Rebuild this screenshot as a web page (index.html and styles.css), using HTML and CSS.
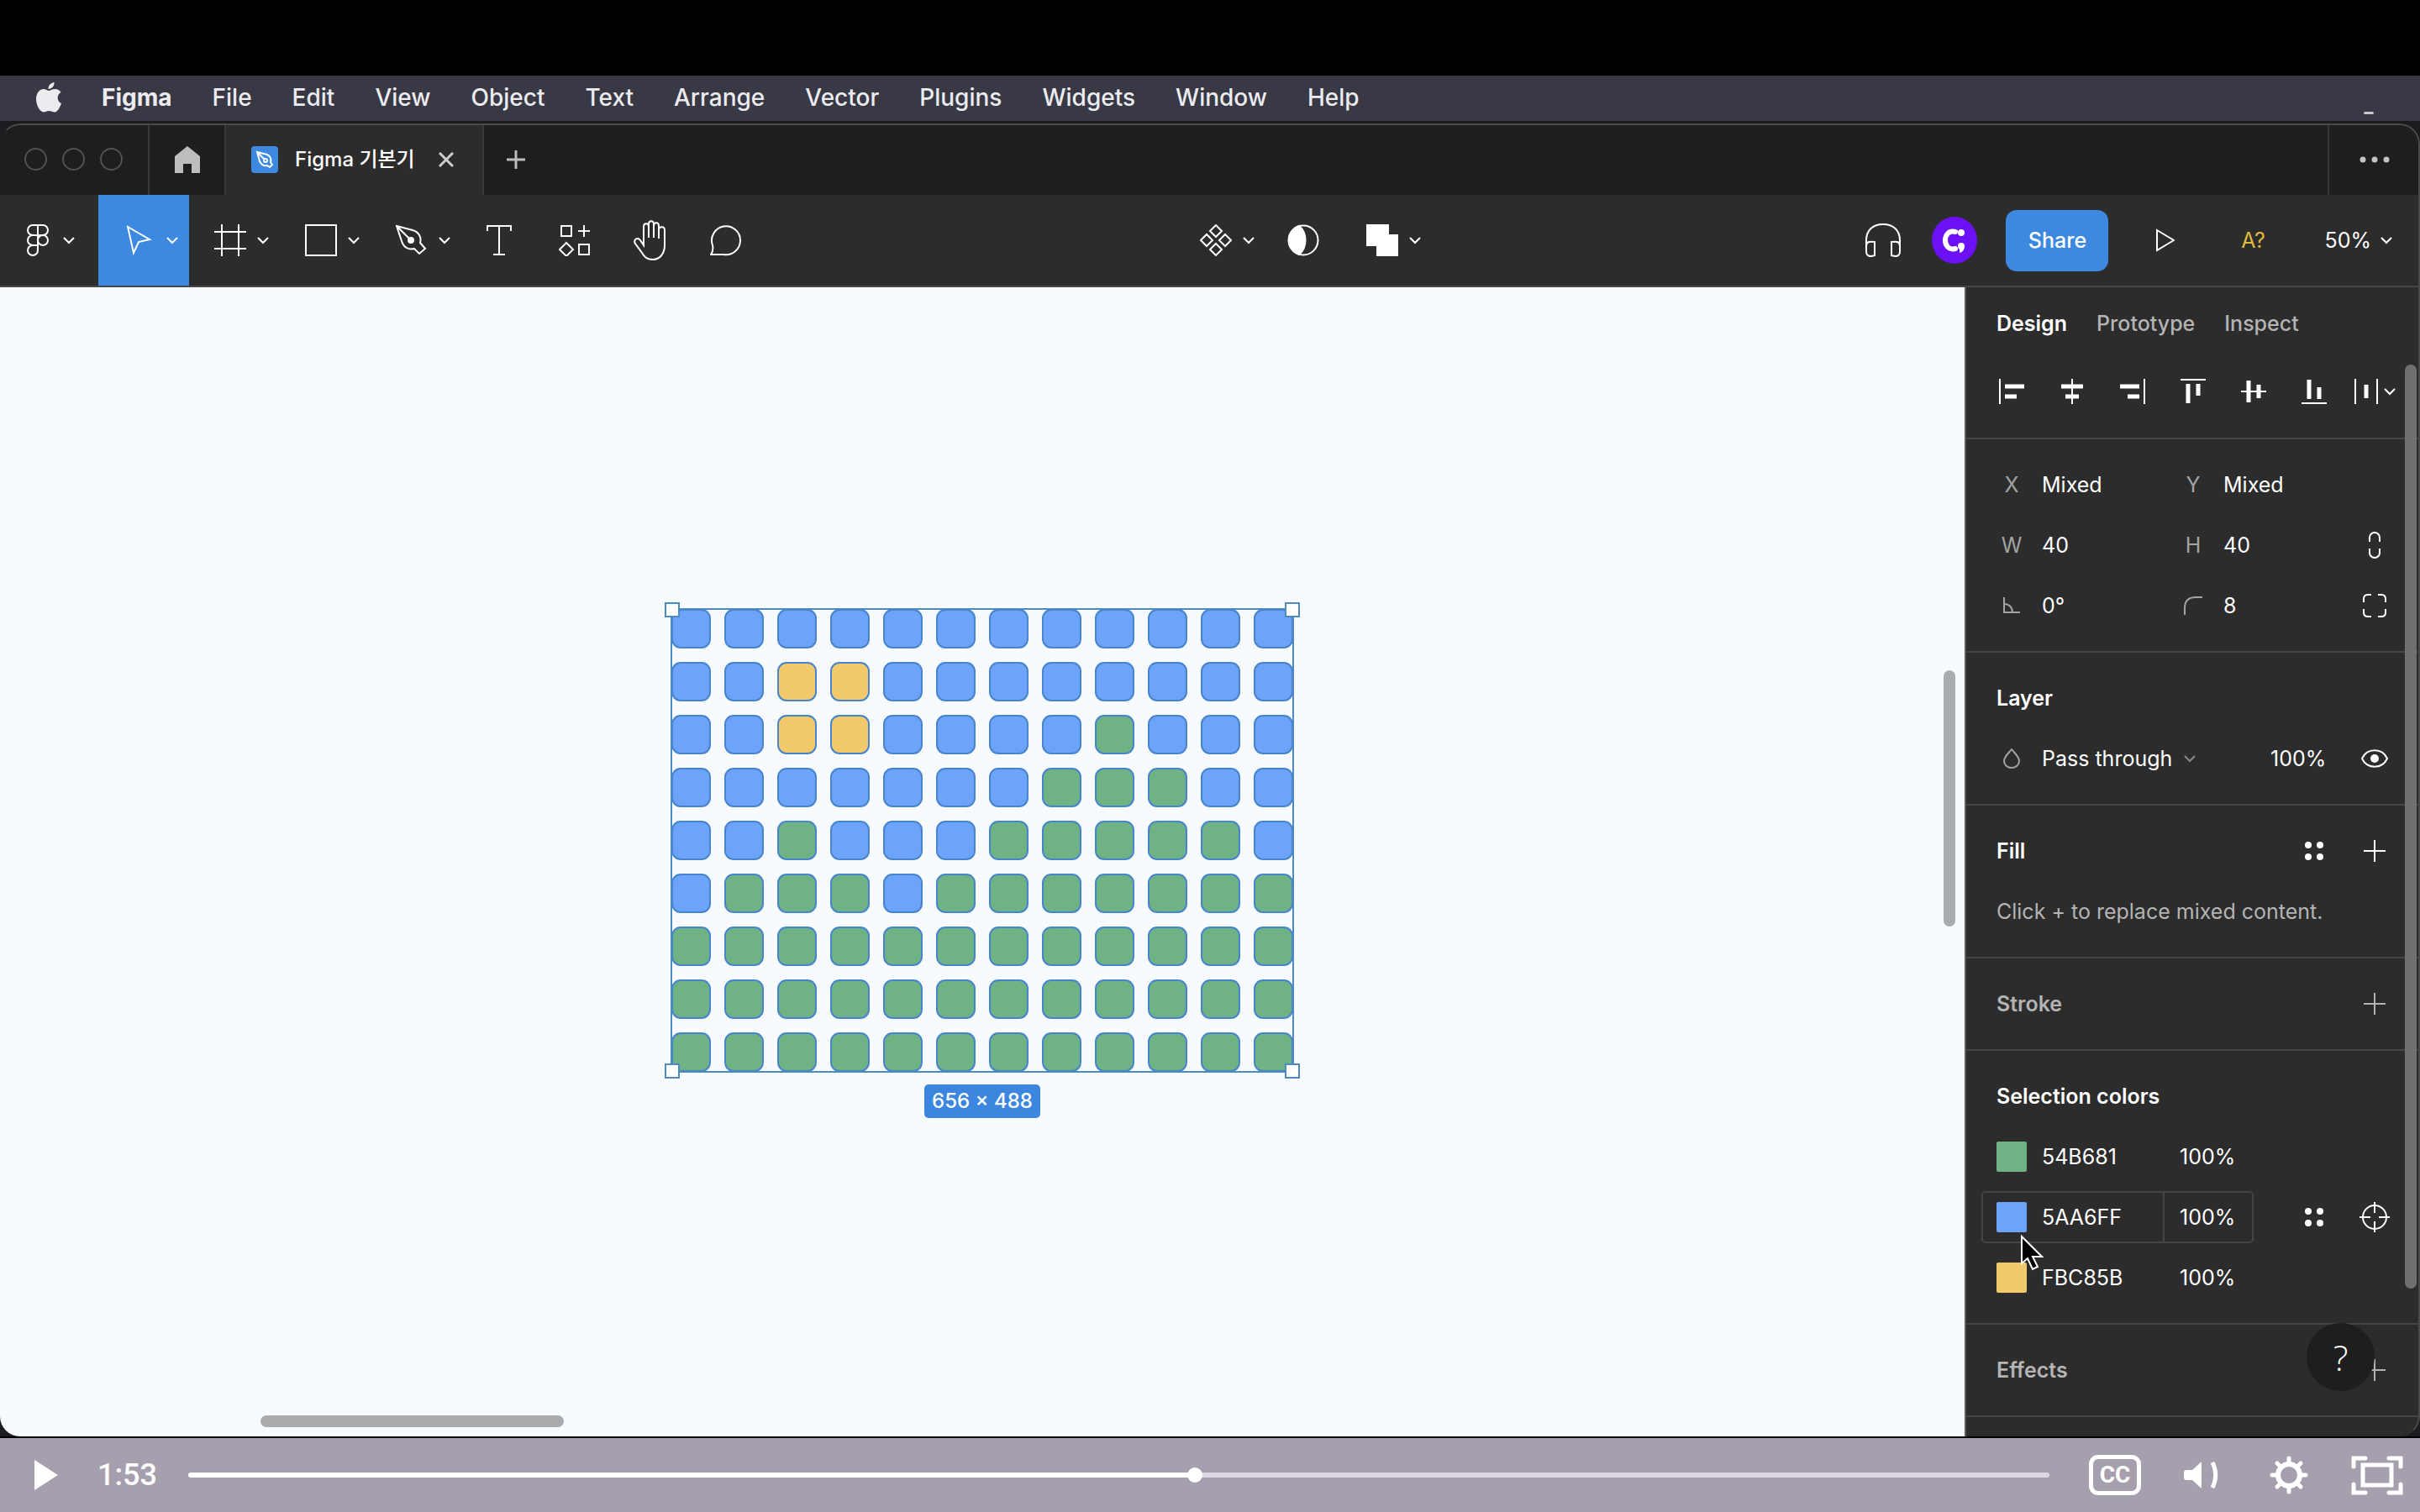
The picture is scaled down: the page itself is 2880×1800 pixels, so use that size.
FILE: index.html
```html
<!DOCTYPE html>
<html lang="ko">
<head>
    <meta charset="UTF-8">
    <meta name="viewport" content="width=device-width, initial-scale=1.0">
    <title>Figma 기본기</title>
    <link rel="stylesheet" href="styles.css">
</head>
<body>
    <svg class="symbols" aria-hidden="true">
        <symbol id="chevron" viewBox="0 0 16 10"><path d="M2 2l6 6 6-6" fill="none" stroke="currentColor" stroke-width="2"/></symbol>
        <symbol id="plus" viewBox="0 0 26 26"><path d="M13 0v26M0 13h26" fill="none" stroke="currentColor" stroke-width="2"/></symbol>
        <symbol id="dots" viewBox="0 0 22 22"><g fill="currentColor" stroke="none"><circle cx="4" cy="4" r="4"/><circle cx="18" cy="4" r="4"/><circle cx="4" cy="18" r="4"/><circle cx="18" cy="18" r="4"/></g></symbol>
    </svg>

    <nav class="menubar">
        <svg class="apple" width="30" height="36" viewBox="0 0 30 36" fill="currentColor"><path d="M15 10c2 0 4-2 7.500-2 3 0 5.500 1.500 7 3.700-5.500 3.300-4.800 11 .5 13.300-1.500 4.500-4.500 10.500-8 10.500-2.600 0-3.600-1.500-6.600-1.500s-4 1.500-6.500 1.500C4.500 35.500 0 27 0 20 0 12.500 4.500 8 9 8c2.600 0 4.500 2 6 2z"/><path d="M14.500 8C14.200 4 17.500.6 21.500 0c.5 4.200-3 8-7 8z"/></svg>
        <strong>Figma</strong>
        <span>File</span>
        <span>Edit</span>
        <span>View</span>
        <span>Object</span>
        <span>Text</span>
        <span>Arrange</span>
        <span>Vector</span>
        <span>Plugins</span>
        <span>Widgets</span>
        <span>Window</span>
        <span>Help</span>
        <i class="menubar-mark"></i>
    </nav>

    <div class="stage">
        <div class="window">
            <header class="tabbar">
                <div class="lights"><i></i><i></i><i></i></div>
                <button class="home" aria-label="Home">
                    <svg width="30" height="32" viewBox="0 0 30 32" fill="#bdbdbd"><path d="M15 0L30 12v20H20V21H10v11H0V12z"/></svg>
                </button>
                <div class="tab">
                    <svg width="32" height="32" viewBox="0 0 32 32"><rect width="32" height="32" rx="4" fill="#3d89e0"/><g fill="none" stroke="#fff" stroke-width="2"><path d="M7 7l12 3c4 2 5 6 4 9l2 3-3 3-3-2c-4 1-7-1-9-5zM7 7l9 9"/><circle cx="17" cy="17" r="2"/></g></svg>
                    <span>Figma 기본기</span>
                    <button aria-label="Close tab">
                        <svg width="18" height="18" viewBox="0 0 18 18"><path d="M1 1l16 16M17 1L1 17" stroke="#cfcfcf" stroke-width="3"/></svg>
                    </button>
                </div>
                <button class="new-tab" aria-label="New tab">
                    <svg width="22" height="22" viewBox="0 0 22 22"><path d="M11 0v22M0 11h22" stroke="#bdbdbd" stroke-width="3"/></svg>
                </button>
                <button class="more" aria-label="More">
                    <svg width="36" height="8" viewBox="0 0 36 8" fill="#c4c4c4"><circle cx="4" cy="4" r="3.500"/><circle cx="18" cy="4" r="3.500"/><circle cx="32" cy="4" r="3.500"/></svg>
                </button>
            </header>

            <div class="toolbar">
                <div class="tools">
                    <button class="tool tool-main" aria-label="Main menu">
                        <svg class="icon" viewBox="0 0 38 38"><g><path d="M21 1h-6a6 6 0 0 0 0 12h6zM21 13h-6a6 6 0 0 0 0 12h6zM21 25h-6a6 6 0 1 0 6 6zM21 1h6a6 6 0 0 1 0 12h-6z"/><circle cx="27" cy="19" r="6"/></g></svg>
                        <svg class="chev"><use href="#chevron"/></svg>
                    </button>
                    <button class="tool active" aria-label="Move">
                        <svg class="icon" viewBox="0 0 38 38"><path d="M5 3l26 15-13 3-6 13z"/></svg>
                        <svg class="chev"><use href="#chevron"/></svg>
                    </button>
                    <button class="tool" aria-label="Frame">
                        <svg class="icon" viewBox="0 0 38 38"><path d="M9 0v38M29 0v38M0 9h38M0 29h38"/></svg>
                        <svg class="chev"><use href="#chevron"/></svg>
                    </button>
                    <button class="tool" aria-label="Rectangle">
                        <svg class="icon" viewBox="0 0 38 38"><rect x="1" y="1" width="36" height="36"/></svg>
                        <svg class="chev"><use href="#chevron"/></svg>
                    </button>
                    <button class="tool" aria-label="Pen">
                        <svg class="icon" viewBox="0 0 38 38"><path d="M1 2l19 5c7 2 11 8 9 15l6 7-7 6-6-6c-7 2-13-2-15-9zM1 2l16 16"/><circle cx="18" cy="19" r="3" fill="#fff"/></svg>
                        <svg class="chev"><use href="#chevron"/></svg>
                    </button>
                    <button class="tool small" aria-label="Text">
                        <svg class="icon" viewBox="0 0 38 38"><path d="M5 8V2h28v6M19 2v34M12 36h14"/></svg>
                    </button>
                    <button class="tool small" aria-label="Resources">
                        <svg class="icon" viewBox="0 0 38 38"><path d="M3 2h12v12H3zM24 24h12v12H24zM30 1v14M23 8h14M9 22l8 8-8 8-8-8z"/></svg>
                    </button>
                    <button class="tool small" aria-label="Hand">
                        <svg class="icon hand" viewBox="0 0 42 48"><path d="M13 25V8c0-5 6-5 6 0v13V5c0-5 6-5 6 0v16V7c0-5 6-5 6 0v15V12c0-5 7-5 7 0v18c0 10-6 17-14 17-7 0-10-3-13-8L3 28c-3-5 3-8 6-4l4 6z"/></svg>
                    </button>
                    <button class="tool small" aria-label="Comment">
                        <svg class="icon" viewBox="0 0 38 38"><path d="M1 36c2-3 3-7 2-11A17 17 0 1 1 16 36z"/></svg>
                    </button>
                </div>

                <div class="tools">
                    <button class="tool" aria-label="Component">
                        <svg class="icon" viewBox="0 0 38 38"><path d="M19 1l7 7-7 7-7-7zM19 23l7 7-7 7-7-7zM8 12l7 7-7 7-7-7zM30 12l7 7-7 7-7-7z"/></svg>
                        <svg class="chev"><use href="#chevron"/></svg>
                    </button>
                    <button class="tool small" aria-label="Mask">
                        <svg class="icon" viewBox="0 0 38 38"><circle cx="19" cy="19" r="17.500"/><path d="M14 2a18 18 0 0 0 0 34c10-8 10-26 0-34z" fill="#fff"/></svg>
                    </button>
                    <button class="tool" aria-label="Union">
                        <svg class="icon" viewBox="0 0 38 38"><path d="M1 1h25v12h11v24H13V25H1z" fill="#fff"/></svg>
                        <svg class="chev"><use href="#chevron"/></svg>
                    </button>
                </div>

                <div class="tools">
                    <button class="audio" aria-label="Audio">
                        <svg width="42" height="40" viewBox="0 0 42 40" fill="none" stroke="#fff" stroke-width="2"><path d="M1 30V20C1 8 9 1 21 1s20 7 20 19v10M1 27c0-5 3-6 10-5v16c-6 2-10 1-10-5zM41 27c0-5-3-6-10-5v16c6 2 10 1 10-5z"/></svg>
                    </button>
                    <svg class="avatar" width="54" height="56" viewBox="0 0 54 56"><ellipse cx="27" cy="28" rx="27" ry="28" fill="#6c10f5"/><path d="M28 18c-8-2-12 4-12 10s4 12 12 10" fill="none" stroke="#fff" stroke-width="6" stroke-linecap="round"/><circle cx="35" cy="19" r="4" fill="#fff"/><path d="M31 35a4 4 0 1 1 8 0c0 4-2 7-6 8v-4c-1-1-2-2-2-4z" fill="#fff"/></svg>
                    <button class="share">Share</button>
                    <button class="present" aria-label="Present">
                        <svg width="22" height="28" viewBox="0 0 22 28"><path d="M1 2l20 12L1 26z" fill="none" stroke="#fff" stroke-width="2"/></svg>
                    </button>
                    <button class="missing">A?</button>
                    <button class="zoom">50% <svg class="chev"><use href="#chevron"/></svg></button>
                </div>
            </div>

            <div class="workspace">
                <main class="canvas">
                    <div class="selection">
                        <div class="tiles" id="tiles"></div>
                        <i class="handle tl"></i><i class="handle tr"></i><i class="handle bl"></i><i class="handle br"></i>
                    </div>
                    <span class="size">656 × 488</span>
                    <i class="scroll-v"></i>
                    <i class="scroll-h"></i>
                </main>

                <aside class="panel">
                    <div class="tabs">
                        <button class="current">Design</button>
                        <button>Prototype</button>
                        <button>Inspect</button>
                    </div>
                    <div class="align">
                        <button aria-label="Align left"><svg viewBox="0 0 30 30"><path d="M1 0v30" /><path class="bar" d="M7 9h23M7 21h14"/></svg></button>
                        <button aria-label="Align horizontal centers"><svg viewBox="0 0 30 30"><path d="M15 0v30"/><path class="bar" d="M2 9h26M7 21h16"/></svg></button>
                        <button aria-label="Align right"><svg viewBox="0 0 30 30"><path d="M29 0v30"/><path class="bar" d="M0 9h23M9 21h14"/></svg></button>
                        <button aria-label="Align top"><svg viewBox="0 0 30 30"><path d="M0 1h30"/><path class="bar" d="M9 6v23M21 6v14"/></svg></button>
                        <button aria-label="Align vertical centers"><svg viewBox="0 0 30 30"><path d="M0 15h30"/><path class="bar" d="M9 2v26M21 7v16"/></svg></button>
                        <button aria-label="Align bottom"><svg viewBox="0 0 30 30"><path d="M0 29h30"/><path class="bar" d="M9 1v23M21 10v14"/></svg></button>
                        <button aria-label="Distribute"><svg viewBox="0 0 30 30"><path d="M2 0v30M28 0v30"/><path class="bar" d="M15 7v16"/></svg><svg class="chev"><use href="#chevron"/></svg></button>
                    </div>

                    <section class="props">
                        <label for="x">X</label><input id="x" value="Mixed">
                        <label for="y">Y</label><input id="y" value="Mixed">
                        <span></span>
                        <label for="w">W</label><input id="w" value="40">
                        <label for="h">H</label><input id="h" value="40">
                        <button aria-label="Constrain proportions"><svg width="16" height="34" viewBox="0 0 16 34"><path d="M2 13V8a6 6 0 0 1 12 0v5M2 21v5a6 6 0 0 0 12 0v-5"/></svg></button>
                        <label for="angle" aria-label="Rotation"><svg width="20" height="20" viewBox="0 0 20 20"><path d="M1 0v18h19M1 8c6 0 10 4 10 10"/></svg></label><input id="angle" value="0°">
                        <label for="radius" aria-label="Corner radius"><svg width="22" height="22" viewBox="0 0 22 22"><path d="M1 22V14C1 5 6 1 14 1h8"/></svg></label><input id="radius" value="8">
                        <button aria-label="Independent corners"><svg width="28" height="28" viewBox="0 0 28 28"><path d="M1 10V6q0-5 5-5h4M18 1h4q5 0 5 5v4M27 18v4q0 5-5 5h-4M10 27H6q-5 0-5-5v-4"/></svg></button>
                    </section>

                    <section>
                        <h2>Layer</h2>
                        <div class="row layer">
                            <label for="blend" aria-label="Blend mode"><svg width="20" height="24" viewBox="0 0 20 24"><path d="M10 1c4 5 9 9 9 14a9 8 0 0 1-18 0c0-5 5-9 9-14z"/></svg></label>
                            <select id="blend"><option>Pass through</option></select>
                            <svg class="chev dim"><use href="#chevron"/></svg>
                            <input aria-label="Layer opacity" value="100%">
                            <button aria-label="Visible"><svg width="32" height="22" viewBox="0 0 32 22"><path d="M1 11C7-2 25-2 31 11 25 24 7 24 1 11z"/><circle cx="16" cy="11" r="5" fill="#fff" stroke="none"/></svg></button>
                        </div>
                    </section>

                    <section>
                        <div class="row">
                            <h2>Fill</h2>
                            <button aria-label="Styles"><svg width="22" height="22"><use href="#dots"/></svg></button>
                            <button aria-label="Add fill"><svg width="26" height="26"><use href="#plus"/></svg></button>
                        </div>
                        <p>Click + to replace mixed content.</p>
                    </section>

                    <section class="empty">
                        <div class="row">
                            <h2>Stroke</h2>
                            <button aria-label="Add stroke"><svg width="26" height="26"><use href="#plus"/></svg></button>
                        </div>
                    </section>

                    <section>
                        <h2>Selection colors</h2>
                        <div class="row">
                            <div class="color">
                                <i class="swatch green"></i><input class="hex" aria-label="Green" value="54B681"><input class="alpha" aria-label="Green opacity" value="100%">
                            </div>
                        </div>
                        <div class="row">
                            <div class="color hovered">
                                <i class="swatch blue"></i><input class="hex" aria-label="Blue" value="5AA6FF"><input class="alpha" aria-label="Blue opacity" value="100%">
                            </div>
                            <button aria-label="Styles"><svg width="22" height="22"><use href="#dots"/></svg></button>
                            <button aria-label="Select all with this color"><svg width="36" height="36" viewBox="0 0 36 36"><circle cx="18" cy="18" r="14"/><path d="M18 0v13M18 23v13M0 18h13M23 18h13"/></svg></button>
                            <svg class="cursor" width="28" height="44" viewBox="0 0 28 44"><path d="M2 3v32l7-6 6 13 6-3-6-12h11z" fill="#000" stroke="#fff" stroke-width="2"/></svg>
                        </div>
                        <div class="row">
                            <div class="color">
                                <i class="swatch yellow"></i><input class="hex" aria-label="Yellow" value="FBC85B"><input class="alpha" aria-label="Yellow opacity" value="100%">
                            </div>
                        </div>
                    </section>

                    <section class="empty">
                        <div class="row">
                            <h2>Effects</h2>
                            <button aria-label="Add effect"><svg width="26" height="26"><use href="#plus"/></svg></button>
                        </div>
                    </section>
                    <i class="scroll-panel"></i>
                    <button class="help">?</button>
                </aside>
            </div>
        </div>
    </div>

    <footer class="player">
        <button class="play" aria-label="Play"><svg width="28" height="36" viewBox="0 0 28 36"><path d="M0 0l28 18L0 36z" fill="#fff"/></svg></button>
        <span class="time">1:53</span>
        <input class="seek" type="range" min="0" max="1000" value="541" aria-label="Seek">
        <button class="captions">CC</button>
        <button aria-label="Volume"><svg width="51" height="32" viewBox="0 0 51 32"><path d="M3 10h7L21 0v32L10 22H3q-3 0-3-3v-6q0-3 3-3z" fill="#fff"/><path d="M34 1c5 10 5 20 0 30" fill="none" stroke="#fff" stroke-width="5"/></svg></button>
        <button aria-label="Settings"><svg width="46" height="46" viewBox="0 0 46 46" fill="none" stroke="#fff" stroke-width="6"><circle cx="23" cy="23" r="13"/><path d="M23 10V3M23 36v7M10 23H3M36 23h7M14 14L9 9M32 14l5-5M14 32l-5 5M32 32l5 5" stroke-width="5" stroke-linecap="round"/></svg></button>
        <button aria-label="Full screen"><svg width="62" height="47" viewBox="0 0 62 47" fill="none" stroke="#fff" stroke-width="5"><rect x="14" y="11" width="34" height="24"/><path d="M17 3H3v10M45 3h14v10M17 44H3V34M45 44h14V34" stroke-linecap="round"/></svg></button>
    </footer>

    <script>
        // b: sky, y: sun, g: hills
        const rows = [
            'bbbbbbbbbbbb',
            'bbyybbbbbbbb',
            'bbyybbbbgbbb',
            'bbbbbbbgggbb',
            'bbgbbbgggggb',
            'bgggbggggggg',
            'gggggggggggg',
            'gggggggggggg',
            'gggggggggggg'
        ];
        const names = { b: 'blue', y: 'yellow', g: 'green' };
        const tiles = document.getElementById('tiles');
        for (const c of rows.join('')) {
            const tile = document.createElement('i');
            tile.className = 'tile ' + names[c];
            tiles.appendChild(tile);
        }
    </script>
</body>
</html>
```

FILE: styles.css
```css
* {
    box-sizing: border-box;
}
body {
    margin: 0;
    min-height: 100vh;
    padding-top: 90px;
    display: flex;
    flex-direction: column;
    background: #000;
    color: #fff;
    font-family: Inter, "Noto Sans CJK KR", sans-serif;
    font-size: 25px;
    line-height: 36px;
}
button, input, select {
    font: inherit;
    color: inherit;
    background: none;
    border: none;
    border-radius: 0;
    margin: 0;
    padding: 0;
}
button {
    display: flex;
    align-items: center;
    justify-content: center;
    cursor: pointer;
}
svg {
    flex: none;
    display: block;
}
.symbols {
    position: absolute;
    width: 0;
    height: 0;
}
.chev {
    width: 16px;
    height: 10px;
}
.dim {
    color: #8a8a8a;
}

/* menu bar */
.menubar {
    position: relative;
    height: 54px;
    padding: 0 43px 3px;
    display: flex;
    align-items: center;
    gap: 48px;
    background: #383945;
    color: #ececf0;
    font-size: 28px;
    font-weight: 500;
}
.menubar strong {
    font-weight: 700;
}
.menubar-mark {
    position: absolute;
    right: 55px;
    bottom: 8px;
    width: 12px;
    height: 3px;
    border-radius: 2px;
    background: #c8c8ce;
}

/* app window */
.stage {
    flex: 1;
    display: flex;
    padding-top: 3px;
    background: #1b1c20;
    border-bottom: 2px solid #000;
}
.window {
    position: relative;
    flex: 1;
    display: flex;
    flex-direction: column;
    border-radius: 24px;
    overflow: hidden;
    background: #2c2c2c;
}
.window::after {
    content: "";
    position: absolute;
    inset: 0;
    border: 2px solid #4b4a48;
    border-left-color: transparent;
    border-bottom-color: transparent;
    border-radius: 24px;
    pointer-events: none;
}
.tabbar {
    height: 85px;
    display: flex;
    background: #1e1e1e;
}
.lights {
    width: 178px;
    padding: 0 30px 0 29px;
    display: flex;
    align-items: center;
    justify-content: space-between;
    border-right: 2px solid #383838;
}
.lights i {
    width: 27px;
    height: 27px;
    border: 2px solid #515151;
    border-radius: 50%;
}
.home {
    width: 91px;
    border-right: 2px solid #383838;
}
.tab {
    padding: 0 34px 0 30px;
    display: flex;
    align-items: center;
    gap: 20px;
    background: #2c2c2c;
    border-right: 2px solid #383838;
    font-size: 24px;
    font-weight: 500;
}
.tab button {
    margin-left: 8px;
}
.new-tab {
    width: 76px;
}
.more {
    width: 110px;
    margin-left: auto;
    border-left: 2px solid #383838;
}

.toolbar {
    height: 110px;
    display: flex;
    justify-content: space-between;
    border-bottom: 2px solid #464646;
}
.tools {
    display: flex;
    align-items: center;
}
.tool {
    width: 108px;
    height: 108px;
    padding: 0 12px 0 30px;
    gap: 12px;
}
.tool-main {
    width: 117px;
    padding: 0 27px 0 24px;
}
.tool.small {
    width: 90px;
    padding: 0;
}
.tool.active {
    background: #3d89e0;
}
.icon {
    width: 38px;
    height: 38px;
    fill: none;
    stroke: #fff;
    stroke-width: 2;
}
.hand {
    width: 42px;
    height: 48px;
}
.audio {
    width: 96px;
    height: 108px;
}
.avatar {
    margin: 0 34px 0 10px;
}
.share {
    width: 122px;
    height: 73px;
    border-radius: 13px;
    background: #3d89e0;
    font-weight: 500;
}
.present {
    width: 136px;
    height: 108px;
}
.missing {
    width: 72px;
    color: #dfb83e;
}
.zoom {
    padding: 0 32px 0 49px;
    gap: 10px;
}

.workspace {
    flex: 1;
    display: flex;
}

/* canvas */
.canvas {
    position: relative;
    flex: 1;
    padding-top: 4px;
    display: flex;
    flex-direction: column;
    align-items: center;
    justify-content: center;
    background: #f8fbfd;
}
.selection {
    position: relative;
    outline: 2px solid #4c8abf;
    outline-offset: -1px;
}
.tiles {
    display: grid;
    grid-template-columns: repeat(12, 47px);
    gap: 16px;
}
.tile {
    height: 47px;
    border: 2px solid #4685cd;
    border-radius: 11px;
}
.blue {
    background: #6da3f8;
}
.green {
    background: #6fb385;
}
.yellow {
    background: #f2c96b;
}
.handle {
    position: absolute;
    width: 18px;
    height: 18px;
    background: #fff;
    border: 2px solid #4c8abf;
}
.tl, .tr {
    top: -8px;
}
.bl, .br {
    bottom: -8px;
}
.tl, .bl {
    left: -8px;
}
.tr, .br {
    right: -8px;
}
.size {
    margin-top: 15px;
    padding: 2px 9px;
    border-radius: 5px;
    background: #3d86e0;
    font-size: 24px;
    font-weight: 500;
}
.scroll-v, .scroll-h, .scroll-panel {
    position: absolute;
    border-radius: 7px;
    background: #a9abac;
}
.scroll-v {
    right: 11px;
    top: 456px;
    width: 14px;
    height: 305px;
}
.scroll-h {
    left: 310px;
    bottom: 11px;
    width: 361px;
    height: 14px;
}

/* design panel */
.panel {
    position: relative;
    width: 542px;
    border-left: 2px solid #5a5b5c;
    background: #2c2c2c;
}
.tabs {
    height: 86px;
    padding: 0 36px;
    display: flex;
    align-items: center;
    gap: 35px;
    color: #b4b4b4;
    font-weight: 500;
}
.tabs .current {
    color: #fff;
    font-weight: 600;
}
.align {
    height: 95px;
    padding: 0 18px 18px;
    display: grid;
    grid-template-columns: repeat(7, 72px);
    border-bottom: 2px solid #444;
}
.align button {
    gap: 5px;
}
.align svg:not(.chev) {
    width: 30px;
    height: 30px;
    stroke: #fff;
    stroke-width: 2;
}
.align .bar {
    stroke-width: 5;
}
.panel section {
    padding: 18px;
    border-bottom: 2px solid #444;
}
.panel section svg {
    fill: none;
    stroke: currentColor;
    stroke-width: 2;
}
.panel section input {
    width: 100%;
    min-width: 0;
}
.panel label {
    display: flex;
    align-items: center;
    justify-content: center;
    color: #a3a3a3;
}
.props {
    display: grid;
    grid-template-columns: 72px 144px 72px 144px 72px;
    grid-auto-rows: 72px;
}
.panel h2 {
    flex: 1;
    margin: 0;
    padding: 0 18px;
    font-size: 25px;
    font-weight: 600;
    line-height: 72px;
}
.panel p {
    margin: 0;
    padding: 0 18px;
    line-height: 72px;
    color: #b4b4b4;
}
.panel .empty {
    color: #b4b4b4;
}
.row {
    position: relative;
    height: 72px;
    display: flex;
    align-items: center;
}
.row label, .row button {
    width: 72px;
    height: 72px;
}
.row select {
    appearance: none;
}
.layer .chev {
    margin: 0 auto 0 12px;
}
.panel .layer input {
    width: 88px;
}
.color {
    width: 324px;
    height: 62px;
    margin-right: auto;
    padding-left: 16px;
    display: flex;
    align-items: center;
    border: 2px solid transparent;
    border-radius: 5px;
}
.swatch {
    flex: none;
    width: 36px;
    height: 36px;
    margin-right: 18px;
    border-radius: 2px;
}
.panel .hex {
    flex: 1;
}
.panel .alpha {
    width: 106px;
    height: 58px;
    padding-left: 18px;
    border-left: 2px solid transparent;
}
.hovered, .panel .hovered .alpha {
    border-color: #454545;
}
.cursor {
    position: absolute;
    left: 46px;
    top: 56px;
    z-index: 1;
}
.scroll-panel {
    right: 4px;
    top: 92px;
    width: 14px;
    height: 1100px;
    background: #707070;
}
.help {
    position: absolute;
    right: 54px;
    bottom: 54px;
    width: 81px;
    height: 81px;
    border-radius: 50%;
    background: #1e1e1e;
    font-family: "Open Sans", sans-serif;
    font-size: 42px;
    font-weight: 300;
}

/* video controls */
.player {
    height: 88px;
    padding: 0 20px 0 41px;
    display: flex;
    align-items: center;
    background: #a69fad;
}
.time {
    width: 72px;
    margin: 0 36px 0 47px;
    font-family: Roboto, sans-serif;
    font-size: 36px;
    font-weight: 500;
}
.seek {
    flex: 1;
    height: 18px;
    margin-right: 47px;
    appearance: none;
}
.seek::-webkit-slider-runnable-track {
    height: 6px;
    border-radius: 3px;
    background: linear-gradient(90deg, #fff 54%, #dcd8e0 54%);
}
.seek::-webkit-slider-thumb {
    appearance: none;
    width: 18px;
    height: 18px;
    margin-top: -6px;
    border-radius: 50%;
    background: #fff;
}
.captions {
    width: 62px;
    height: 48px;
    border: 5px solid #fff;
    border-radius: 11px;
    font-family: Roboto, sans-serif;
    font-size: 28px;
    font-weight: 700;
}
.player button + button {
    margin-left: 51px;
}
```
